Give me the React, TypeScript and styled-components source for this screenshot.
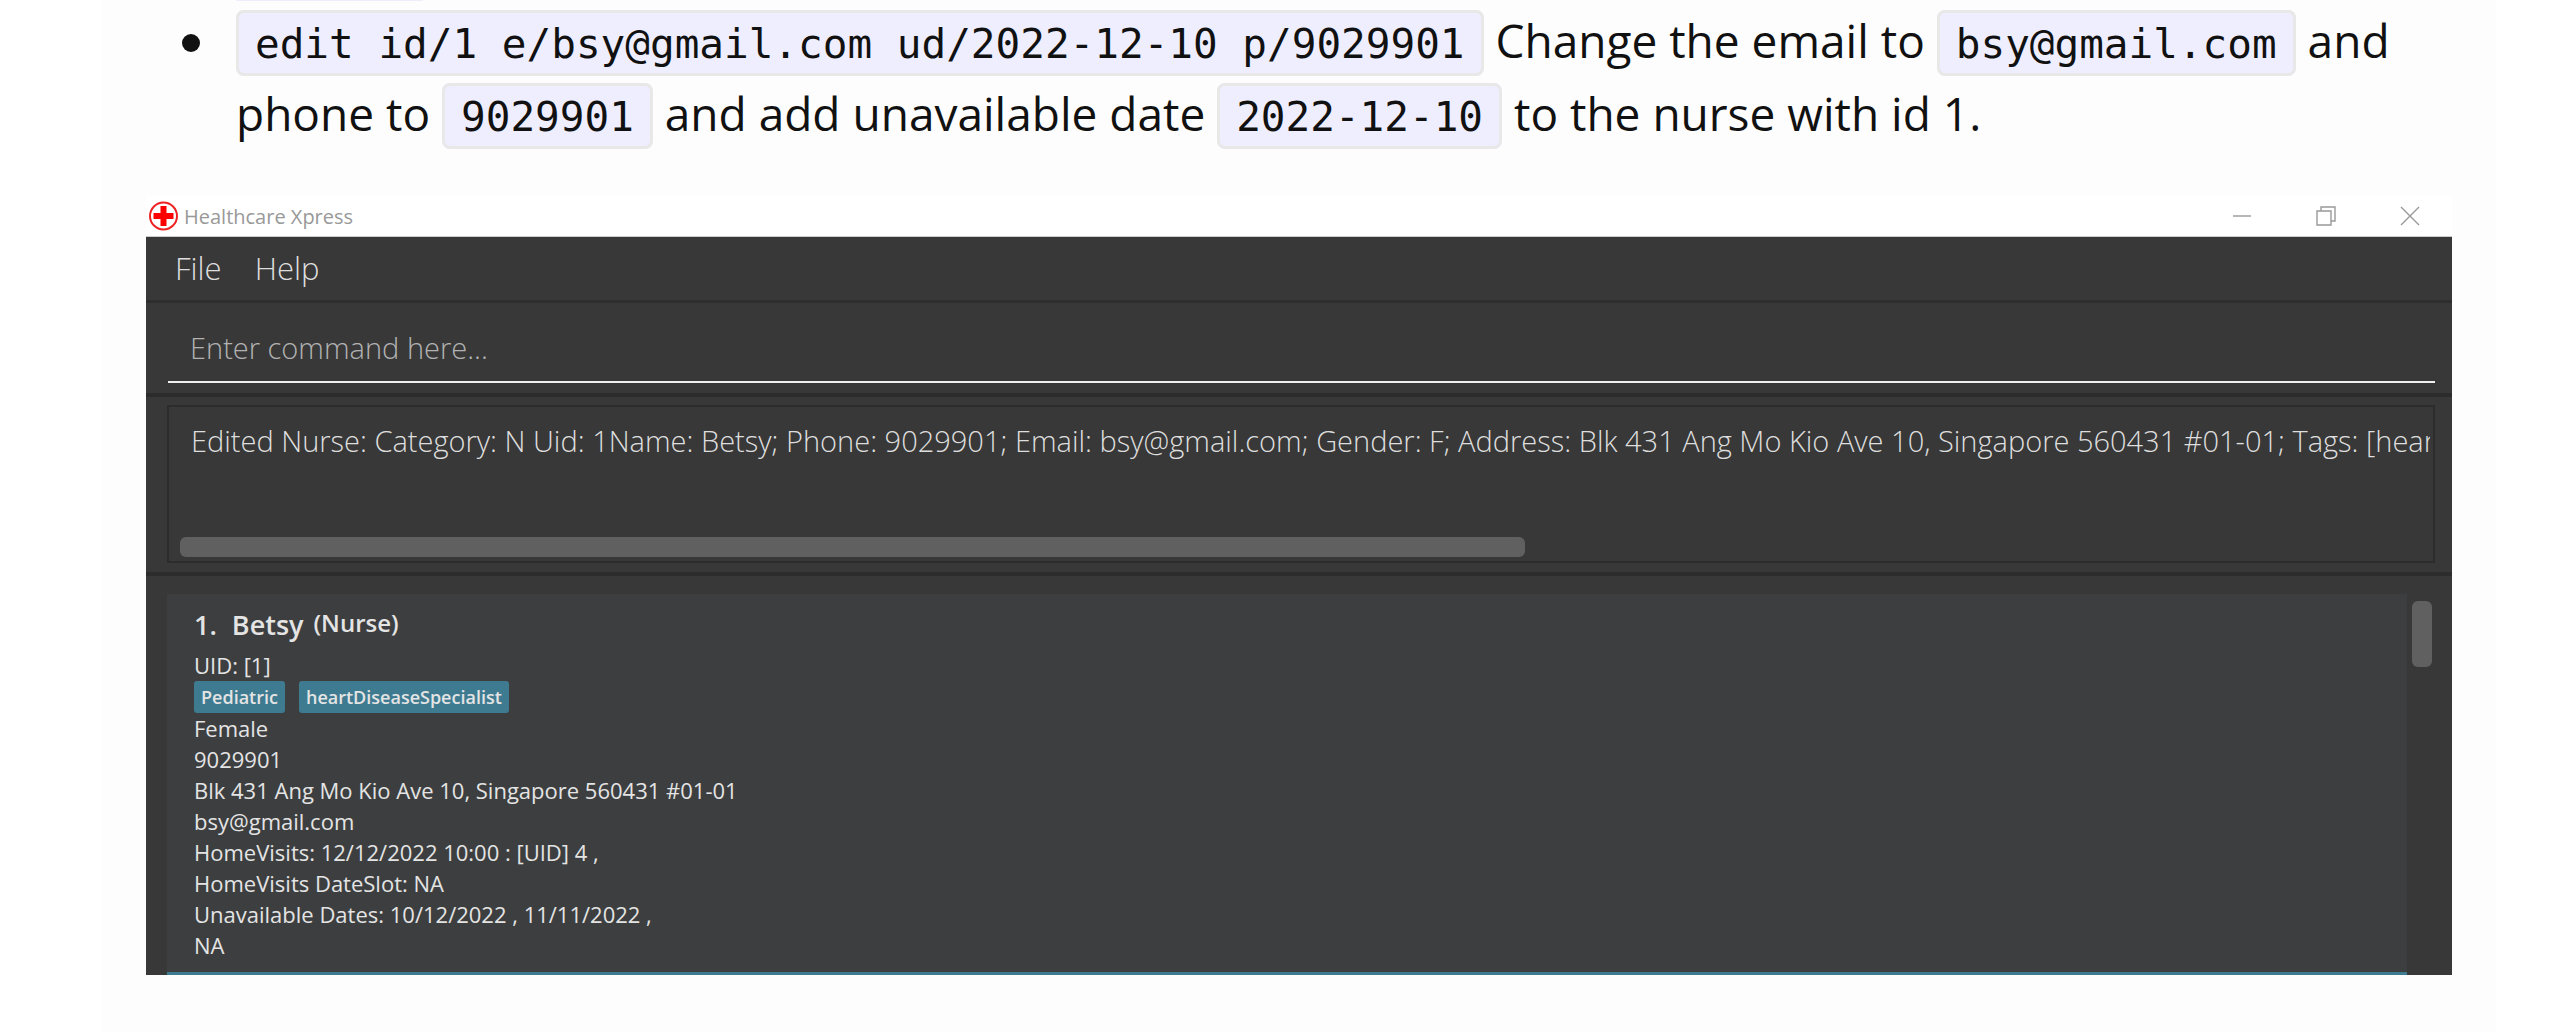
import React from "react";
import styled, { createGlobalStyle } from "styled-components";

const uiFont = `"Open Sans", "Noto Sans", sans-serif`;
const codeFont = `"DejaVu Sans Mono", "Liberation Mono", monospace`;

const GlobalStyle = createGlobalStyle`
  *, *::before, *::after { box-sizing: border-box; }
  body { margin: 0; background: #ffffff; color: #111111; font-family: ${uiFont}; }
`;

const Page = styled.main`
  padding: 0 79px 0 101px;
`;

const Article = styled.article`
  padding: 0 44px 57px 45px;
  background: #fdfdfd;
`;

const CodeEdge = styled.div`
  width: 187px;
  height: 1px;
  margin-left: 90px;
  background: #eeeefa;
`;

const Examples = styled.ul`
  margin: 0 0 46px;
  padding: 3px 0 0 90px;
  list-style: none;
`;

const Example = styled.li`
  position: relative;
  font-size: 46px;
  line-height: 73px;

  &::before {
    content: "";
    position: absolute;
    left: -54px;
    top: 30px;
    width: 18px;
    height: 18px;
    border-radius: 50%;
    background: #111111;
  }
`;

const Code = styled.code`
  padding: 7px 16px 5px;
  border: 3px solid #e8e8e8;
  border-radius: 8px;
  background: #eeeeff;
  font-family: ${codeFont};
  font-size: 41px;
  line-height: 1;
`;

const AppWindow = styled.section`
  background: #383838;
`;

const TitleBar = styled.header`
  display: flex;
  align-items: center;
  height: 41px;
  padding-left: 3px;
  border-bottom: 1px solid #cccccc;
  background: #ffffff;
`;

const AppTitle = styled.h1`
  flex: 1;
  margin: 0 0 0 6px;
  padding-top: 2px;
  color: #999999;
  font-size: 20px;
  font-weight: 400;
  line-height: 30px;
`;

const WindowButton = styled.button`
  display: grid;
  place-items: center;
  width: 84px;
  height: 40px;
  padding: 0;
  border: 0;
  background: transparent;
  color: #999999;
`;

const MenuBar = styled.nav`
  display: flex;
  gap: 33px;
  height: 66px;
  padding: 0 29px;
  border-bottom: 3px solid #2e2e2e;
`;

const MenuButton = styled.button`
  padding: 0 0 2px;
  border: 0;
  background: transparent;
  color: #dedede;
  font-family: ${uiFont};
  font-size: 31px;
  font-weight: 300;
`;

const CommandArea = styled.form`
  padding: 8px 17px 10px 22px;
  border-bottom: 4px solid #2c2c2c;
`;

const CommandInput = styled.input`
  display: block;
  width: 100%;
  height: 72px;
  padding: 2px 22px 0;
  border: 0;
  border-bottom: 2px solid #f0f0f0;
  outline: 0;
  background: transparent;
  color: #ffffff;
  font-family: ${uiFont};
  font-size: 29px;
  font-weight: 300;

  &::placeholder { color: #b2b2b2; opacity: 1; }
`;

const ResultArea = styled.div`
  padding: 8px 17px 9px 21px;
  border-bottom: 4px solid #2c2c2c;
`;

const ResultBox = styled.div`
  padding: 10px 3px 4px;
  border: 2px solid #2c2c2c;
`;

const ResultText = styled.textarea`
  display: block;
  width: 100%;
  height: 120px;
  padding: 4px 0 0 19px;
  border: 0;
  outline: 0;
  resize: none;
  overflow: hidden;
  background: transparent;
  color: #dedede;
  font-family: ${uiFont};
  font-size: 29px;
  font-weight: 300;
  line-height: 40px;
  white-space: pre;
`;

const ResultThumb = styled.div`
  width: calc(60% - 10px);
  height: 20px;
  margin-left: 8px;
  border-radius: 6px;
  background: #606060;
`;

const ListArea = styled.div`
  display: flex;
  gap: 5px;
  padding: 18px 20px 0 21px;
`;

const PersonCard = styled.article`
  flex: 1;
  padding: 12px 27px 0;
  border-bottom: 3px solid #3e7b91;
  background: #3c3e3f;
  color: #e4e4e4;
  font-size: 22px;
  line-height: 31px;
`;

const ListThumb = styled.div`
  width: 20px;
  height: 66px;
  margin-top: 7px;
  border-radius: 6px;
  background: #606060;
`;

const PersonHeading = styled.h2`
  display: flex;
  align-items: flex-start;
  margin: 0 0 6px;
  font-size: 27px;
  font-weight: 600;
  line-height: 38px;
`;

const PersonName = styled.span`
  margin: 0 10px 0 15px;
`;

const PersonRole = styled.span`
  font-size: 24px;
  line-height: 34px;
`;

const Field = styled.p`
  margin: 0;
`;

const Tags = styled.div`
  display: flex;
  gap: 14px;
`;

const Tag = styled.span`
  height: 32px;
  padding: 0 7px;
  border-radius: 3px;
  background: #3e7b91;
  font-size: 18px;
  font-weight: 600;
  line-height: 32px;
`;

const LastField = styled(Field)`
  padding-bottom: 11px;
`;

const HealthLogo = () => (
  <svg width="29" height="30" viewBox="0 0 29 30" aria-hidden="true">
    <circle cx="14.5" cy="15" r="13.5" fill="#ffffff" stroke="#ee2222" strokeWidth="2" />
    <path d="M11.5 5h6v7h7v6h-7v7h-6v-7h-7v-6h7z" fill="#ff0000" />
  </svg>
);

const strokeProps = { fill: "none", stroke: "currentColor", strokeWidth: 1.4 };

const fields = [
  "Female",
  "9029901",
  "Blk 431 Ang Mo Kio Ave 10, Singapore 560431 #01-01",
  "bsy@gmail.com",
  "HomeVisits: 12/12/2022 10:00 : [UID] 4 ,",
  "HomeVisits DateSlot: NA",
  "Unavailable Dates: 10/12/2022 , 11/11/2022 ,",
];

const result =
  "Edited Nurse: Category: N Uid: 1Name: Betsy; Phone: 9029901; Email: bsy@gmail.com; Gender: F; Address: Blk 431 Ang Mo Kio Ave 10, Singapore 560431 #01-01; Tags: [hear";

export default function App() {
  return (
    <>
      <GlobalStyle />
      <Page>
        <Article>
          <CodeEdge />
          <Examples>
            <Example>
              <Code>edit id/1 e/bsy@gmail.com ud/2022-12-10 p/9029901</Code> Change the email to{" "}
              <Code>bsy@gmail.com</Code> and phone to <Code>9029901</Code> and add unavailable date{" "}
              <Code>2022-12-10</Code> to the nurse with id 1.
            </Example>
          </Examples>
          <AppWindow>
            <TitleBar>
              <HealthLogo />
              <AppTitle>Healthcare Xpress</AppTitle>
              <WindowButton aria-label="Minimize">
                <svg width="20" height="20" viewBox="0 0 20 20" {...strokeProps}>
                  <path d="M1 10h18" />
                </svg>
              </WindowButton>
              <WindowButton aria-label="Restore">
                <svg width="20" height="20" viewBox="0 0 20 20" {...strokeProps}>
                  <path d="M1 5h14v14H1zM5 5V1h14v14h-4" />
                </svg>
              </WindowButton>
              <WindowButton aria-label="Close">
                <svg width="20" height="20" viewBox="0 0 20 20" {...strokeProps}>
                  <path d="M1 1l18 18M19 1L1 19" />
                </svg>
              </WindowButton>
            </TitleBar>
            <MenuBar>
              <MenuButton>File</MenuButton>
              <MenuButton>Help</MenuButton>
            </MenuBar>
            <CommandArea>
              <CommandInput aria-label="Command" placeholder="Enter command here..." />
            </CommandArea>
            <ResultArea>
              <ResultBox>
                <ResultText aria-label="Result" readOnly wrap="off" value={result} />
                <ResultThumb />
              </ResultBox>
            </ResultArea>
            <ListArea>
              <PersonCard>
                <PersonHeading>
                  <span>1.</span>
                  <PersonName>Betsy</PersonName>
                  <PersonRole>(Nurse)</PersonRole>
                </PersonHeading>
                <Field>UID: [1]</Field>
                <Tags>
                  <Tag>Pediatric</Tag>
                  <Tag>heartDiseaseSpecialist</Tag>
                </Tags>
                {fields.map((field) => (
                  <Field key={field}>{field}</Field>
                ))}
                <LastField>NA</LastField>
              </PersonCard>
              <ListThumb />
            </ListArea>
          </AppWindow>
        </Article>
      </Page>
    </>
  );
}
